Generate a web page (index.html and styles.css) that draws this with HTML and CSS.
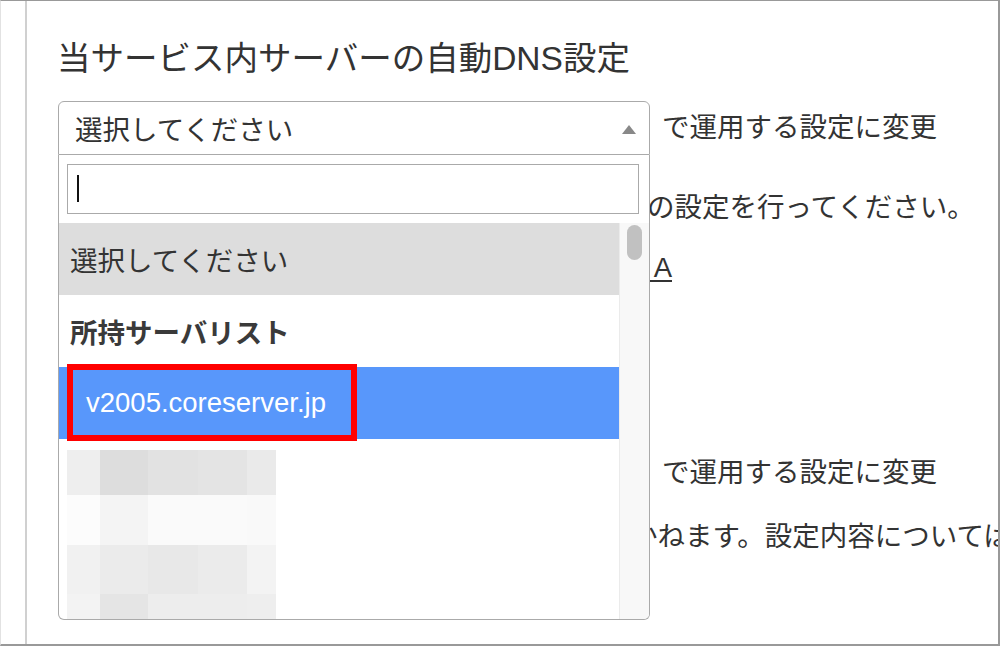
FILE: index.html
```html
<!DOCTYPE html>
<html lang="ja">
<head>
	<meta charset="utf-8">
	<title>DNS設定</title>
	<link rel="stylesheet" href="styles.css">
</head>
<body>
	<div class="frame">
		<div class="panel">

			<!-- 自動DNS設定 -->
			<section class="dns">
				<h2 class="dns-title">当サービス内サーバーの自動DNS設定</h2>
				<div class="dns-row">
					<div class="picker is-open">
						<div class="picker-value">選択してください<span class="picker-arrow"></span></div>

						<!-- open dropdown -->
						<div class="picker-drop">
							<div class="picker-search"><span class="caret"></span></div>
							<div class="picker-body">
								<ul class="picker-list">
									<li class="opt is-current">選択してください</li>
									<li class="opt opt-group">所持サーバリスト</li>
									<li class="opt opt-child is-hover">v2005.coreserver.jp<span class="mark"></span></li>
									<li class="opt-blur">
										<span style="background:#eeeeee"></span><span style="background:#dddddd"></span><span style="background:#e2e2e2"></span><span style="background:#e4e4e4"></span><span style="background:#eaeaea"></span>
										<span style="background:#fcfcfc"></span><span style="background:#f4f4f4"></span><span style="background:#fafafa"></span><span style="background:#fafafa"></span><span style="background:#f9f9f9"></span>
										<span style="background:#f1f1f1"></span><span style="background:#ebebeb"></span><span style="background:#e8e8e8"></span><span style="background:#ebebeb"></span><span style="background:#f3f3f3"></span>
										<span style="background:#f3f3f3"></span><span style="background:#e5e5e5"></span><span style="background:#ededed"></span><span style="background:#ededed"></span><span style="background:#eeeeee"></span>
									</li>
								</ul>
								<div class="picker-scroll"><span class="picker-thumb"></span></div>
							</div>
						</div>
					</div>
					<span class="dns-after">で運用する設定に変更</span>
				</div>
				<p class="note note-first"><span class="note-lead">ドメイン管理会社でネームサーバー</span><span class="note-tail">の設定を行ってください。</span></p>
				<p class="note note-link"><a href="#">ネームサーバー設定のQ &amp; A</a></p>
			</section>

			<!-- 手動DNS設定 -->
			<section class="dns dns-next">
				<h2 class="dns-title">当サービス外サーバーの手動DNS設定</h2>
				<div class="dns-row">
					<div class="picker">
						<div class="picker-value">選択してください<span class="picker-arrow"></span></div>
					</div>
					<span class="dns-after">で運用する設定に変更</span>
				</div>
				<p class="note note-last"><span class="note-lead note-lead-short">誤った設定は表示の不具合を起こし</span><span class="note-tail">かねます。設定内容については</span></p>
			</section>

		</div>
	</div>
</body>
</html>
```

FILE: styles.css
```css
/* base */
	*{
		margin: 0px;
		padding: 0px;
		box-sizing: border-box;
	}
	body{
		font-family: "Liberation Sans", "Noto Sans CJK JP", sans-serif;
		color: #333;
		background: #fff;
	}
	ul{
		list-style: none;
	}

/* screenshot frame */
	.frame{
		width: 1000px;
		height: 646px;
		border-top: 1px solid #999;
		border-right: 2px solid #999;
		border-bottom: 2px solid #999;
		border-left: 1px solid #e2e2e2;
		overflow: hidden;
	}
	.panel{
		height: 100%;
		margin-left: 24px;
		border-left: 2px solid #d0d0d0;
		padding: 38px 0px 0px 31px;
	}

/* sections */
	.dns-next{
		margin-top: 96px;
	}
	.dns-title{
		font-size: 33.5px;
		font-weight: normal;
		line-height: 40px;
		margin-bottom: 22px;
		margin-left: -1px;
		white-space: nowrap;
	}
	.dns-row{
		display: flex;
		align-items: center;
		height: 54px;
	}
	.dns-after{
		font-size: 27.5px;
		margin-left: 12px;
		padding-bottom: 6px;
		white-space: nowrap;
	}

/* notes beside the dropdown */
	.note{
		display: flex;
		font-size: 27.5px;
		line-height: 40px;
		white-space: nowrap;
	}
	.note-first{
		margin-top: 33px;
	}
	.note-link{
		margin-top: 20px;
		width: 614px;
		justify-content: flex-end;
	}
	.note-link a{
		color: #333;
		text-decoration: underline;
		text-underline-offset: 3px;
	}
	.note-last{
		margin-top: 17px;
	}
	.note-lead{
		flex: none;
		width: 589px;
		overflow: hidden;
		text-align: right;
	}
	.note-lead-short{
		width: 572px;
	}

/* select box */
	.picker{
		position: relative;
		flex: none;
		width: 592px;
		height: 54px;
	}
	.picker-value{
		display: flex;
		align-items: center;
		justify-content: space-between;
		height: 100%;
		padding: 0px 13px 0px 16px;
		font-size: 27.5px;
		border: 1px solid #aaa;
		border-radius: 6px;
	}
	.is-open .picker-value{
		border-radius: 6px 6px 0px 0px;
	}
	.picker-arrow{
		width: 0px;
		height: 0px;
		border-left: 7px solid transparent;
		border-right: 7px solid transparent;
		border-bottom: 9px solid #888;
		margin-top: 2px;
	}

/* dropdown */
	.picker-drop{
		position: absolute;
		top: 100%;
		left: 0px;
		z-index: 10;
		width: 592px;
		height: 465px;
		background: #fff;
		border: 1px solid #aaa;
		border-top: none;
		border-radius: 0px 0px 6px 6px;
		overflow: hidden;
	}
	.picker-search{
		height: 50px;
		margin: 9px 10px 9px 8px;
		border: 1px solid #aaa;
		padding: 10px 0px 0px 9px;
	}
	.caret{
		display: block;
		width: 2px;
		height: 27px;
		background: #111;
	}
	.picker-body{
		display: flex;
		height: 396px;
	}
	.picker-list{
		flex: 1;
	}
	.opt{
		position: relative;
		display: flex;
		align-items: center;
		height: 72px;
		padding-left: 11px;
		font-size: 27.5px;
		white-space: nowrap;
	}
	.is-current{
		background: #ddd;
	}
	.opt-group{
		font-weight: bold;
		color: #3a3a3a;
	}
	.opt-child{
		padding-left: 27px;
	}
	.is-hover{
		background: #5897fb;
		color: #fff;
	}
	/* red highlight drawn over the option */
	.mark{
		position: absolute;
		left: 8px;
		top: -3px;
		width: 290px;
		height: 77px;
		border: 6px solid #f00;
	}
	.opt-blur{
		display: grid;
		grid-template-columns: 33px 48px 50px 49px 29px;
		grid-template-rows: 45px 50px 49px 26px;
		width: 209px;
		margin: 11px 0px 0px 8px;
	}
	.picker-scroll{
		flex: none;
		width: 30px;
		background: #f8f8f8;
		border-left: 1px solid #ebebeb;
	}
	.picker-thumb{
		display: block;
		width: 15px;
		height: 35px;
		margin: 2px 0px 0px 7px;
		background: #c1c1c1;
		border-radius: 8px;
	}
```
